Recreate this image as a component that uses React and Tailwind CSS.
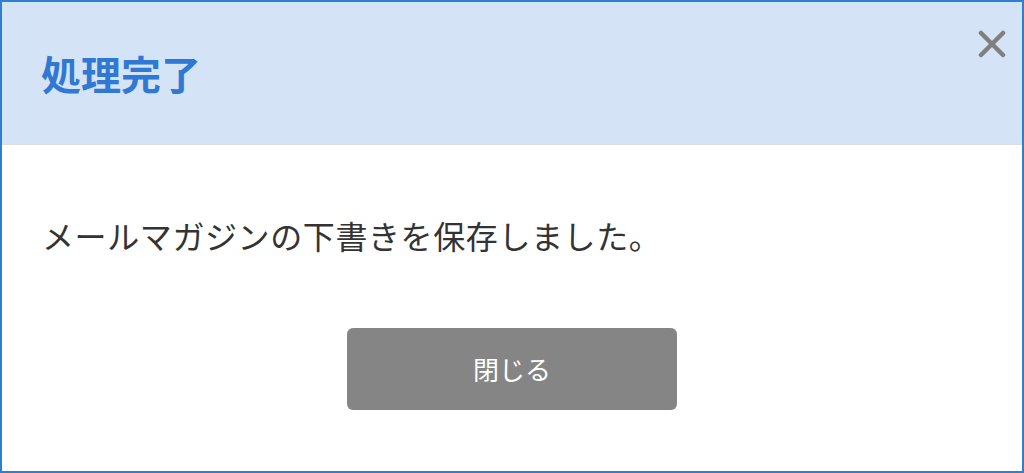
import React from 'react';

const jp = { fontFamily: '"Noto Sans CJK JP", "Noto Sans", sans-serif' };

export default function App() {
  return (
    <div className="w-[1024px] h-[473px] bg-white border-2 border-[#2d7fd1] flex flex-col" style={jp}>
      {/* header */}
      <div className="relative h-[143px] shrink-0 bg-[#d4e3f5] border-b border-[#dedede] flex items-center pl-[39px]">
        <h1 className="text-[40px] leading-none font-bold text-[#2f78d3]">処理完了</h1>
        <button className="absolute right-[14px] top-[26px] w-[32px] h-[32px] flex items-center justify-center">
          <svg width="28" height="28" viewBox="0 0 28 28" fill="none">
            <path d="M3 3 L25 25 M25 3 L3 25" stroke="#7f7f7f" strokeWidth="4.5" strokeLinecap="round" />
          </svg>
        </button>
      </div>

      {/* body */}
      <div className="flex-1 flex flex-col">
        <p className="pt-[70px] pl-[40px] text-[32px] leading-[40px] tracking-[0.6px] text-[#333333]">
          メールマガジンの下書きを保存しました。
        </p>
        <div className="flex justify-center pt-[73px]">
          <button className="w-[330px] h-[82px] rounded-[6px] bg-[#858585] text-white text-[26px] leading-none">
            閉じる
          </button>
        </div>
      </div>
    </div>
  );
}
